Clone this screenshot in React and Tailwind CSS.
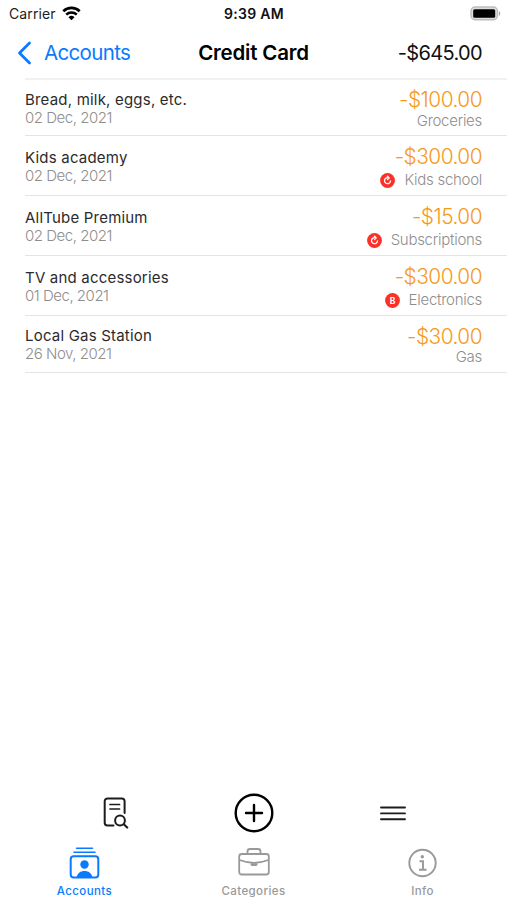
import React from 'react';

const transactions = [
  { title: 'Bread, milk, eggs, etc.', date: '02 Dec, 2021', amount: '-$100.00', category: 'Groceries' },
  { title: 'Kids academy', date: '02 Dec, 2021', amount: '-$300.00', category: 'Kids school', badge: 'repeat' },
  { title: 'AllTube Premium', date: '02 Dec, 2021', amount: '-$15.00', category: 'Subscriptions', badge: 'repeat' },
  { title: 'TV and accessories', date: '01 Dec, 2021', amount: '-$300.00', category: 'Electronics', badge: 'letter' },
  { title: 'Local Gas Station', date: '26 Nov, 2021', amount: '-$30.00', category: 'Gas' },
];

const StatusBar = () => (
  <div className="grid grid-cols-3 items-center h-7 pl-[9px] pr-[6px] text-[14px] leading-7 text-[#222]">
    <div className="flex items-center gap-[6px]">
      <span className="tracking-[0.1px]">Carrier</span>
      <svg className="w-[19px] h-[15px] -mt-[2px]" viewBox="0 0 19 15" fill="none" stroke="#000">
        <path d="M1.3 5.2a11.7 11.7 0 0 1 16.4 0" strokeWidth="2.6" />
        <path d="M4.2 8.6a7.6 7.6 0 0 1 10.6 0" strokeWidth="2.4" />
        <path d="M9.5 14.2 6.5 11.2a4.3 4.3 0 0 1 6 0z" fill="#000" stroke="none" />
      </svg>
    </div>
    <span className="text-center font-semibold text-[#111] text-[14px] tracking-[0.3px] -ml-[2px]">9:39 AM</span>
    <svg className="w-[31px] h-[15px] justify-self-end -mt-[2px]" viewBox="0 0 31 15">
      <rect x="1" y="1" width="26.4" height="12.8" rx="4" fill="#ddd" stroke="#bdbdbd" strokeWidth="1.4" />
      <rect x="3.2" y="3.2" width="22" height="8.6" rx="1.5" fill="#000" />
      <path d="M28.800 5v5c2-.8 2-4.200 0-5z" fill="#aaa" />
    </svg>
  </div>
);

const Header = () => (
  <header className="grid grid-cols-3 items-center h-[50px] pl-[17px] pr-[25px] text-[20.5px]">
    <div className="flex items-center gap-[12px] text-[#0a7aff]">
      <svg className="w-[15px] h-[24px]" viewBox="0 0 15 24" fill="none" stroke="currentColor" strokeWidth="2.8" strokeLinecap="round" strokeLinejoin="round">
        <path d="M12.500 2 2.500 12l10 10" />
      </svg>
      <span className="tracking-[-0.65px]">Accounts</span>
    </div>
    <h1 className="text-center font-semibold tracking-[-0.2px] ml-[8px] whitespace-nowrap">Credit Card</h1>
    <span className="text-right text-[20px] tracking-[-0.65px] text-[#111]">-$645.00</span>
  </header>
);

const Badge = ({ type }) => (
  <svg className="w-[15px] h-[15px]" viewBox="0 0 15 15">
    <circle cx="7.500" cy="7.500" r="7.400" fill="#fb3026" />
    {type === 'repeat' ? (
      <g fill="none" stroke="#fff" strokeWidth="1.3" strokeLinecap="round">
        <path d="M8.300 4.800A3 3 0 1 0 10.500 7.800" />
        <path d="M7.400 3.300 9.200 5 7.500 6.600" strokeLinejoin="round" />
      </g>
    ) : (
      <text x="7.500" y="10.600" textAnchor="middle" fontSize="8.500" fontWeight="700" fill="#fff">B</text>
    )}
  </svg>
);

const Transaction = ({ item }) => (
  <li className={`group flex justify-between items-center border-b border-[#e4e4e4] pr-[25px] ${item.badge ? 'h-[60px]' : 'h-[56px] last:h-[57px]'}`}>
    <div className="text-[15px] leading-[18px] pt-[3px] group-last:pt-[1px]">
      <p className="text-[#2b2b2b] tracking-[0.2px]">{item.title}</p>
      <p className="font-light text-[#8e8e8e] tracking-[-0.48px]">{item.date}</p>
    </div>
    <div className={`flex flex-col items-end ${item.badge ? 'pt-[5px]' : 'pt-[2px]'}`}>
      <p className="text-[20.8px] leading-[24px] font-light text-[#f59a1b] tracking-[-0.5px]">{item.amount}</p>
      <div className={`flex items-center gap-[9px] ${item.badge ? 'h-[22px]' : 'h-[17px]'}`}>
        {item.badge && <Badge type={item.badge} />}
        <span className="text-[15px] leading-[18px] font-light text-[#8e8e8e] tracking-[-0.28px]">{item.category}</span>
      </div>
    </div>
  </li>
);

const Toolbar = () => (
  <div className="grid grid-cols-3 justify-items-center items-center h-[52px] pl-[47px] pr-[45px] text-black">
    <svg className="w-[26px] h-[32px]" viewBox="0 0 26 32" fill="none" stroke="#1c1c1c" strokeWidth="2" strokeLinecap="round">
      <path d="M10.500 28.500H4.500a2.800 2.800 0 0 1-2.800-2.800V4.300A2.800 2.800 0 0 1 4.500 1.500h14.300a2.800 2.800 0 0 1 2.800 2.800V16" />
      <path d="M7 7.500h9.500M7 12h9.500" strokeWidth="1.700" />
      <circle cx="17" cy="23.500" r="4.900" />
      <path d="m20.800 27.300 3.400 3.200" strokeWidth="2.200" />
    </svg>
    <svg className="w-[40px] h-[40px]" viewBox="0 0 40 40" fill="none" stroke="#000" strokeWidth="2.400" strokeLinecap="round">
      <circle cx="20" cy="20" r="18.300" />
      <path d="M20 12v16M12 20h16" />
    </svg>
    <svg className="w-[28px] h-[16px]" viewBox="0 0 28 16" fill="none" stroke="#1c1c1c" strokeWidth="1.900" strokeLinecap="round">
      <path d="M2 2.500h24M2 8.400h24M2 14.300h24" />
    </svg>
  </div>
);

const TabBar = () => (
  <nav className="grid grid-cols-3 h-[61px] pt-[7px] text-[11.5px] leading-[14px] font-medium tracking-[0.4px] text-[#999]">
    <div className="flex flex-col items-center gap-[4px] text-[#0a7aff]">
      <svg className="w-[31px] h-[34px]" viewBox="0 0 31 34" fill="none" stroke="currentColor" strokeLinecap="round">
        <path d="M7.500 2.300h16M5 6.300h21" strokeWidth="1.600" />
        <rect x="1.700" y="10.300" width="27.600" height="21.200" rx="3" strokeWidth="2" />
        <circle cx="15.500" cy="18.500" r="4.200" fill="currentColor" stroke="none" />
        <path d="M7.500 31.500c1-4.500 4-6.500 8-6.500s7 2 8 6.500z" fill="currentColor" stroke="none" />
      </svg>
      <span>Accounts</span>
    </div>
    <div className="flex flex-col items-center gap-[4px]">
      <svg className="w-[32px] h-[34px]" viewBox="0 0 32 34" fill="none" stroke="currentColor" strokeWidth="1.800">
        <path d="M9.500 8V5.500A2.500 2.500 0 0 1 12 3h8a2.500 2.500 0 0 1 2.500 2.500V8" />
        <rect x="1.200" y="8" width="29.600" height="20.500" rx="2.500" />
        <path d="M1.500 14c9 3.500 20 3.500 29 0" />
        <path d="M12.500 17.200v1.400a1.600 1.600 0 0 0 1.500 1.500h4a1.600 1.600 0 0 0 1.500-1.500v-1.400z" fill="currentColor" stroke="none" />
      </svg>
      <span>Categories</span>
    </div>
    <div className="flex flex-col items-center gap-[4px]">
      <svg className="w-[30px] h-[34px]" viewBox="0 0 30 34" fill="none" stroke="currentColor" strokeWidth="1.900">
        <circle cx="14.500" cy="17" r="13.200" />
        <circle cx="14.300" cy="10.700" r="1.700" fill="currentColor" stroke="none" />
        <path d="M11.500 15.200H15v8.500M11 23.700h7.500" />
      </svg>
      <span>Info</span>
    </div>
  </nav>
);

const App = () => (
  <div className="flex flex-col h-screen bg-white font-['Inter',sans-serif] overflow-hidden">
    <StatusBar />
    <Header />
    <ul className="ml-[25px] border-t-2 border-[#f1f1f1] flex-1">
      {transactions.map((item) => (
        <Transaction key={item.title} item={item} />
      ))}
    </ul>
    <Toolbar />
    <TabBar />
  </div>
);

export default App;
